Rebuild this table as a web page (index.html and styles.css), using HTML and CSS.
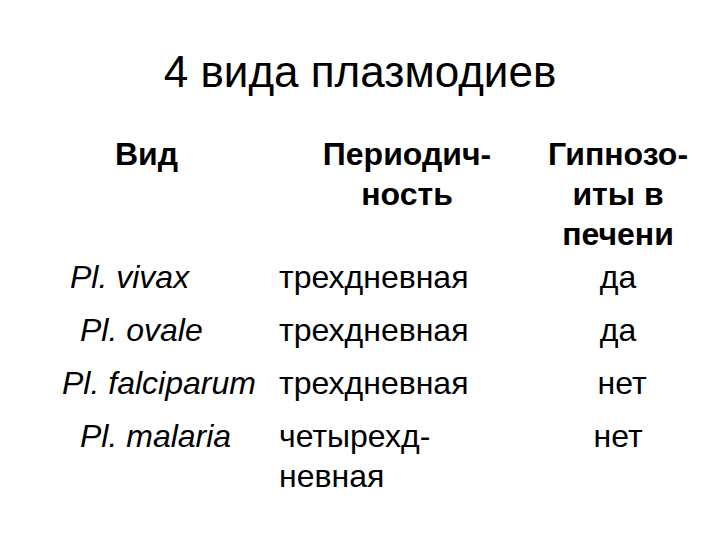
FILE: index.html
```html
<!DOCTYPE html>
<html lang="ru">
<head>
<meta charset="utf-8">
<title>4 вида плазмодиев</title>
<link rel="stylesheet" href="styles.css">
</head>
<body>
<div class="slide">
  <h1 class="title">4 вида плазмодиев</h1>
  <div class="table">
    <div class="row head">
      <div class="cell c1 in-head">Вид</div>
      <div class="cell c2 center">Периодич-<br>ность</div>
      <div class="cell c3 center">Гипнозо-<br>иты в<br>печени</div>
    </div>
    <div class="row first">
      <div class="cell c1 sp in-a">Pl. vivax</div>
      <div class="cell c2">трехдневная</div>
      <div class="cell c3 center">да</div>
    </div>
    <div class="row">
      <div class="cell c1 sp in-b">Pl. ovale</div>
      <div class="cell c2">трехдневная</div>
      <div class="cell c3 center">да</div>
    </div>
    <div class="row">
      <div class="cell c1 sp in-c">Pl. falciparum</div>
      <div class="cell c2">трехдневная</div>
      <div class="cell c3 center nudge">нет</div>
    </div>
    <div class="row">
      <div class="cell c1 sp in-b">Pl. malaria</div>
      <div class="cell c2">четырехд-<br>невная</div>
      <div class="cell c3 center">нет</div>
    </div>
  </div>
</div>
</body>
</html>
```
FILE: styles.css
```css
html, body {
  margin: 0;
  padding: 0;
  background: #ffffff;
}

.slide {
  width: 720px;
  height: 540px;
  font-family: "Liberation Sans", Arial, sans-serif;
  color: #000000;
  overflow: hidden;
}

.title {
  margin: 47px 0 0 0;
  font-size: 44px;
  line-height: 50px;
  font-weight: normal;
  text-align: center;
}

.table {
  margin-top: 37px;
  display: flex;
  flex-direction: column;
}

.row {
  display: grid;
  grid-template-columns: 279px 256px 166px;
  font-size: 32px;
  line-height: 40px;
  margin-top: 13px;
}

.row.head {
  margin-top: 0;
  font-weight: bold;
}

.row.first {
  margin-top: 3px;
}

.cell.center {
  text-align: center;
}

.sp {
  font-style: italic;
}

.in-head { padding-left: 115px; }
.in-a { padding-left: 70px; }
.in-b { padding-left: 80px; }
.in-c { padding-left: 62px; }

.c2 { letter-spacing: 0; }

.nudge { padding-left: 8px; }
```
